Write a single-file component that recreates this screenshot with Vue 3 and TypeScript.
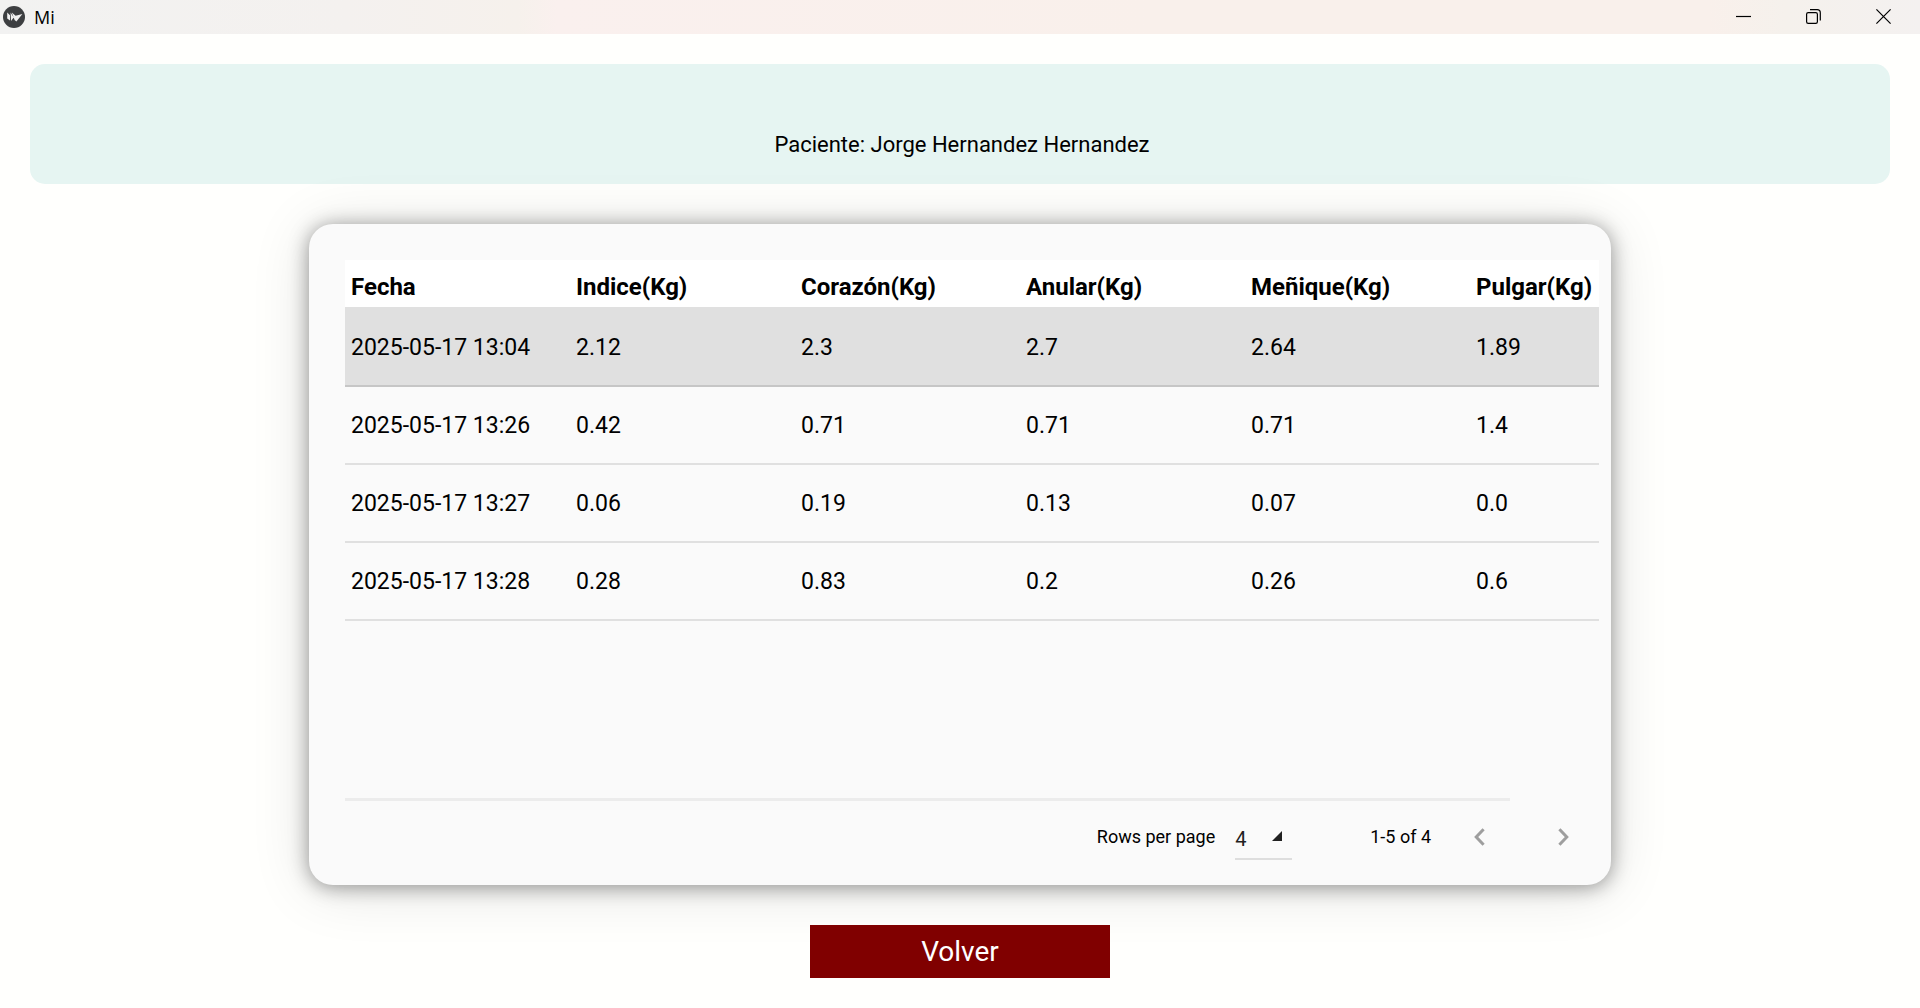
<script setup lang="ts">
import { ref } from 'vue'

interface Medicion {
  fecha: string
  fuerzas: string[]
}

const paciente = 'Jorge Hernandez Hernandez'
const columnas: string[] = ['Fecha', 'Indice(Kg)', 'Corazón(Kg)', 'Anular(Kg)', 'Meñique(Kg)', 'Pulgar(Kg)']
const mediciones: Medicion[] = [
  { fecha: '2025-05-17 13:04', fuerzas: ['2.12', '2.3', '2.7', '2.64', '1.89'] },
  { fecha: '2025-05-17 13:26', fuerzas: ['0.42', '0.71', '0.71', '0.71', '1.4'] },
  { fecha: '2025-05-17 13:27', fuerzas: ['0.06', '0.19', '0.13', '0.07', '0.0'] },
  { fecha: '2025-05-17 13:28', fuerzas: ['0.28', '0.83', '0.2', '0.26', '0.6'] },
]
const seleccionada = ref(0)
const filasPorPagina = ref('4')
</script>

<template>
  <div class="window">
    <header class="titlebar">
      <svg class="logo" viewBox="0 0 22 22" aria-hidden="true">
        <circle cx="11" cy="11" r="11" fill="#3d3f41" />
        <path d="M4.2 6.6 7 9.2 7 14.6 4.2 12.6zM7.6 6.4 10.8 11.6 8 15zM8.8 6.6 12.6 9.8 19.4 8 13.4 15.6 11.6 14z" fill="#f1f1f1" />
      </svg>
      <span class="title">Mi</span>
      <div class="controls">
        <button type="button" aria-label="Minimizar">
          <svg viewBox="0 0 15 15"><path d="M0 7.5H15" /></svg>
        </button>
        <button type="button" aria-label="Restaurar">
          <svg viewBox="0 0 15 15">
            <rect x=".6" y="3.6" width="10.8" height="10.8" rx="1.6" />
            <path d="M4 .7H11.2Q14.3 .7 14.3 3.8V11.4" />
          </svg>
        </button>
        <button type="button" aria-label="Cerrar">
          <svg viewBox="0 0 15 15"><path d="M.4 .4 14.6 14.6M14.6 .4 .4 14.6" /></svg>
        </button>
      </div>
    </header>

    <main class="content">
      <section class="banner">Paciente: {{ paciente }}</section>

      <section class="card">
        <div class="table-area">
          <table>
            <thead>
              <tr>
                <th v-for="columna in columnas" :key="columna" scope="col">{{ columna }}</th>
              </tr>
            </thead>
            <tbody>
              <tr
                v-for="(medicion, i) in mediciones"
                :key="medicion.fecha"
                :class="{ selected: i === seleccionada }"
                @click="seleccionada = i"
              >
                <td>{{ medicion.fecha }}</td>
                <td v-for="(fuerza, j) in medicion.fuerzas" :key="j">{{ fuerza }}</td>
              </tr>
            </tbody>
          </table>
        </div>
        <div class="divider"></div>
        <footer class="pagination">
          <label for="filas">Rows per page</label>
          <div class="select">
            <select id="filas" v-model="filasPorPagina">
              <option>4</option>
            </select>
            <svg viewBox="0 0 10 10" aria-hidden="true"><path d="M10 0V10H0z" /></svg>
          </div>
          <span class="range">1-5 of 4</span>
          <div class="pager">
            <button type="button" aria-label="Página anterior">
              <svg viewBox="0 0 11 18"><path d="M9.6 1.2 2.2 9l7.4 7.8" /></svg>
            </button>
            <button type="button" aria-label="Página siguiente">
              <svg viewBox="0 0 11 18"><path d="M1.4 1.2 8.8 9l-7.4 7.8" /></svg>
            </button>
          </div>
        </footer>
      </section>

      <button class="back" type="button">Volver</button>
    </main>
  </div>
</template>

<style>
body {
  background: #fffffd;
}
</style>

<style scoped>
.window {
  min-height: 100vh;
  box-sizing: border-box;
  background: #fffffd;
  color: #000;
  font-family: Roboto, sans-serif;
}

button {
  padding: 0;
  border: 0;
  background: none;
  font-family: inherit;
}

.titlebar {
  display: flex;
  align-items: center;
  height: 34px;
  padding: 0 2px 0 3px;
  background: linear-gradient(90deg, #f2f2f1 0%, #f4f1ef 18%, #f6f1ec 27%, #faf0ee 29%, #f9f0eb 60%, #f9f0eb 89%, #f5f1ec 93%, #f4f1f0 100%);
}

.logo {
  width: 22px;
  height: 22px;
}

.title {
  margin-left: 9px;
  font-family: "Open Sans", sans-serif;
  font-size: 18px;
  line-height: 24px;
}

.controls {
  display: flex;
  align-self: flex-start;
  margin-left: auto;
}

.controls button {
  display: grid;
  place-items: center;
  width: 70px;
  height: 33px;
}

.controls svg {
  width: 15px;
  height: 15px;
  fill: none;
  stroke: #000;
  stroke-width: 1.2;
}

.content {
  display: flex;
  flex-direction: column;
  align-items: center;
  gap: 40px;
  padding: 30px;
}

.banner {
  align-self: stretch;
  padding: 65px 0 23px 4px;
  border-radius: 15px;
  background: #e6f5f2;
  font-size: 22px;
  line-height: 32px;
  text-align: center;
}

.card {
  box-sizing: border-box;
  width: 70%;
  padding: 36px 12px 12px 36px;
  border-radius: 24px;
  background: #fafafa;
  box-shadow: 0 2px 20px rgba(0, 0, 0, 0.4), 0 4px 60px rgba(0, 0, 0, 0.12);
}

.table-area {
  min-height: 538px;
}

table {
  width: 100%;
  border-spacing: 0;
  table-layout: fixed;
  font-size: 23px;
  line-height: 28px;
  text-align: left;
}

th {
  box-sizing: border-box;
  width: 225px;
  padding: 13px 0 6px 6px;
  background: #fff;
  font-size: 24px;
  font-weight: 700;
  white-space: nowrap;
}

th:last-child {
  width: auto;
}

td {
  padding: 25px 0 23px 6px;
  border-bottom: 2px solid #e0e0e0;
}

tbody tr:first-child td {
  padding-top: 27px;
}

.selected td {
  border-bottom-color: #c6c6c6;
  background: #e0e0e0;
}

.divider {
  height: 3px;
  margin-right: 89px;
  background: #ececec;
}

.pagination {
  display: flex;
  align-items: center;
  justify-content: flex-end;
  height: 72px;
  padding-right: 12px;
  font-size: 18px;
  line-height: 24px;
}

.select {
  position: relative;
  width: 57px;
  margin: 0 78px 0 20px;
}

.select select {
  display: block;
  width: 100%;
  height: 46px;
  padding: 6px 0 0;
  border: 0;
  border-bottom: 2px solid #dedede;
  border-radius: 0;
  appearance: none;
  background: none;
  color: #212121;
  font: 20px/24px Roboto, sans-serif;
}

.select svg {
  position: absolute;
  top: 17px;
  right: 10px;
  width: 10px;
  height: 10px;
  fill: #212121;
  pointer-events: none;
}

.pager {
  display: flex;
  gap: 36px;
  margin-left: 24px;
}

.pager button {
  display: grid;
  place-items: center;
  width: 48px;
  height: 48px;
}

.pager svg {
  width: 11px;
  height: 18px;
  fill: none;
  stroke: #9e9e9e;
  stroke-width: 3;
}

.back {
  width: 300px;
  height: 53px;
  background: #800000;
  color: #fff;
  font-size: 28px;
  line-height: 32px;
}
</style>
